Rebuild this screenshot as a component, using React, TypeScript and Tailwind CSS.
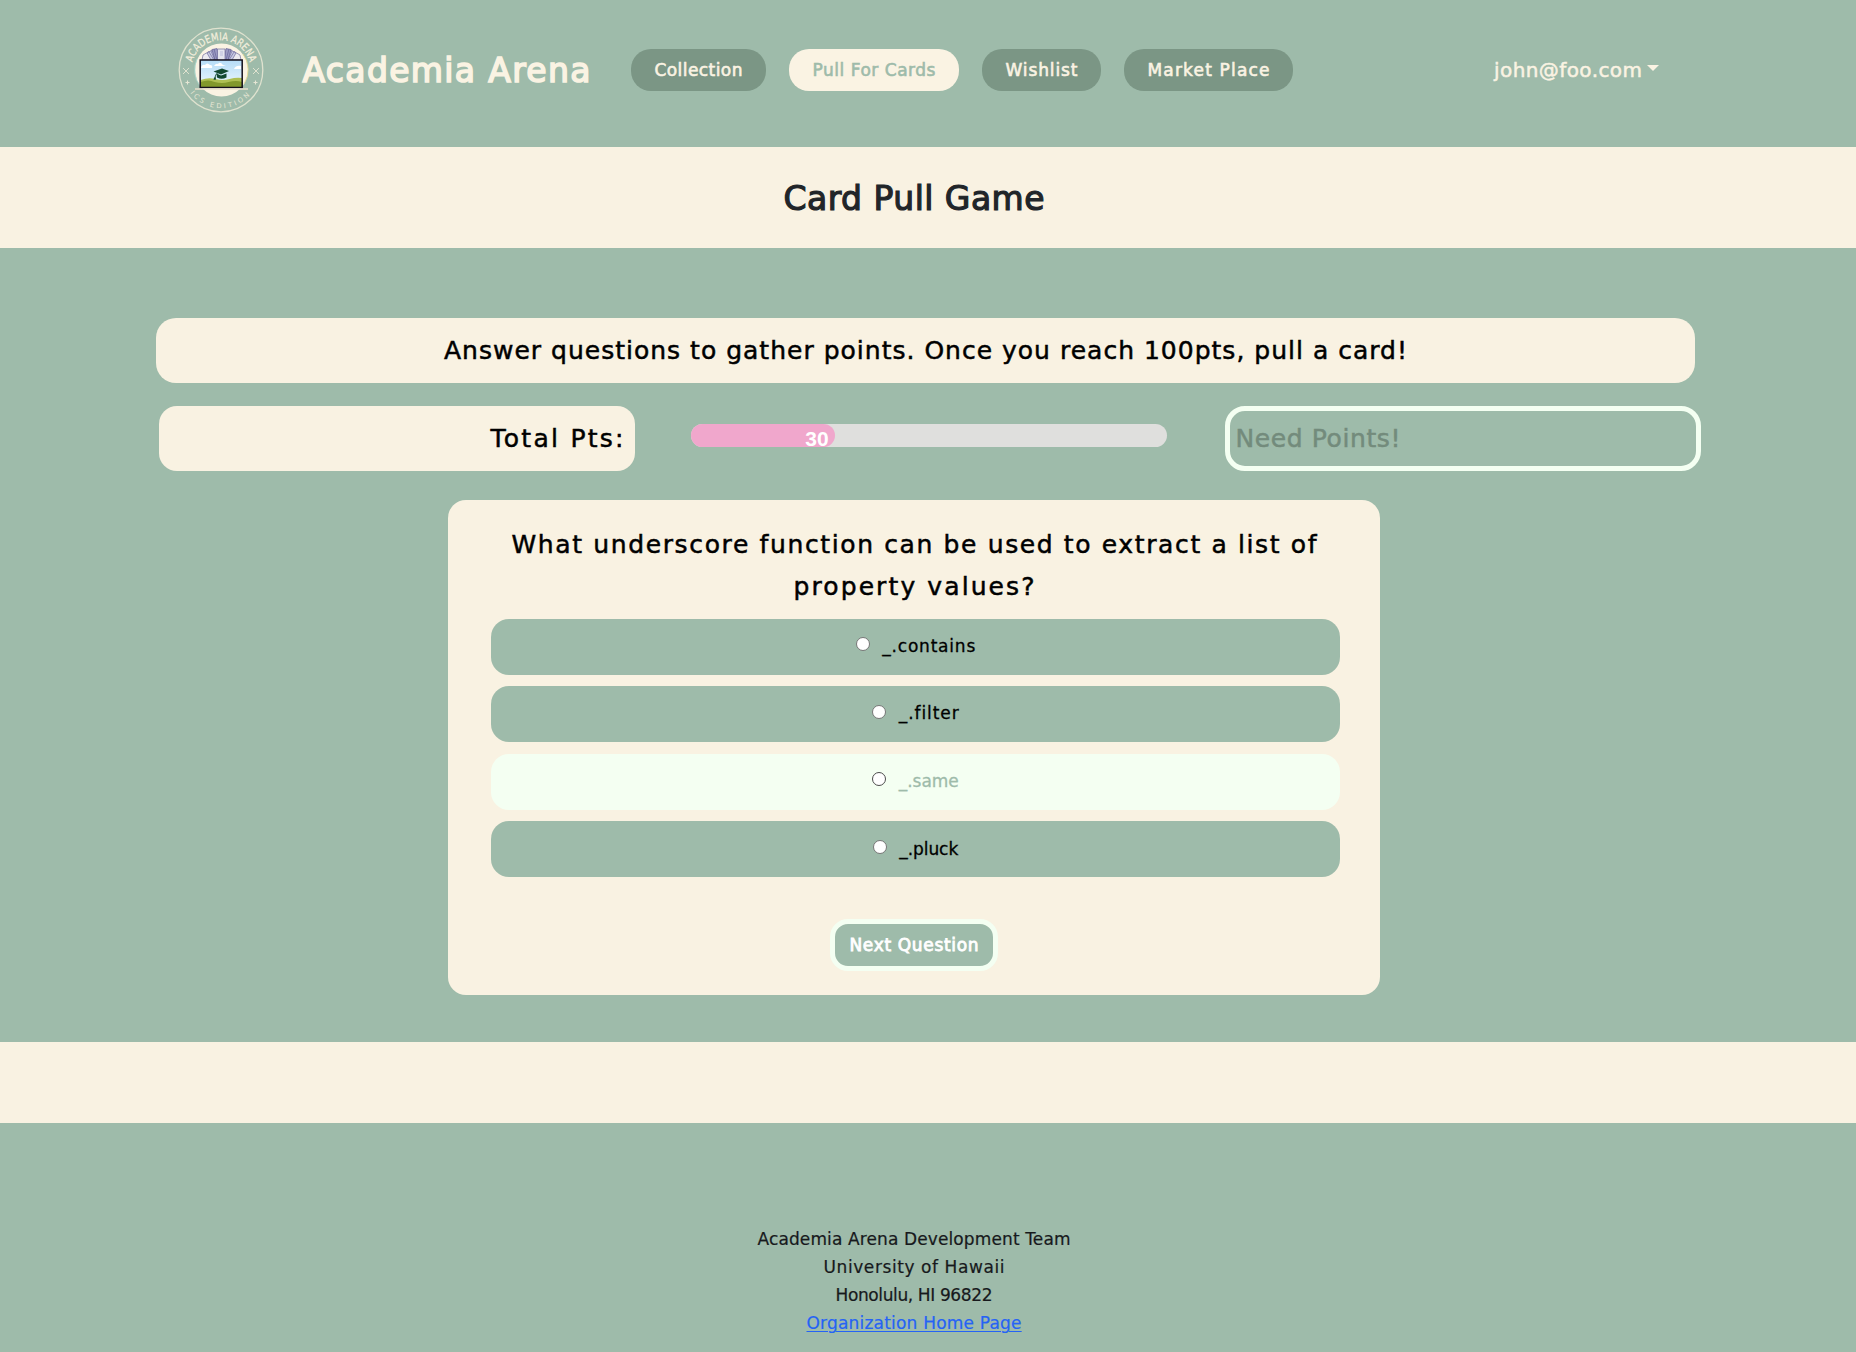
import { useLayoutEffect, useRef } from 'react';

type LabelProps = { text: string; width: number; className?: string };

/** Single-line label whose tracking is computed so that it spans a given width. */
function Label({ text, width, className = '' }: LabelProps) {
  const ref = useRef<HTMLSpanElement>(null);
  useLayoutEffect(() => {
    const el = ref.current;
    if (!el) return;
    el.style.letterSpacing = '0px';
    const natural = el.getBoundingClientRect().width;
    const spacing = (width - natural) / (text.length - 1);
    el.style.letterSpacing = `${spacing}px`;
    el.style.marginRight = `${-spacing}px`;
  }, [text, width]);
  return (
    <span ref={ref} className={`inline-block whitespace-pre ${className}`}>
      {text}
    </span>
  );
}

function Logo() {
  return (
    <svg viewBox="0 0 86 86" className="size-[86px] shrink-0">
      <defs>
        <path id="arc-top" d="M13.3 43 A29.7 29.7 0 0 1 72.7 43" />
        <path id="arc-bottom" d="M4.7 43 A38.3 38.3 0 0 0 81.3 43" />
        <linearGradient id="sky" x1="0" y1="0" x2="0" y2="1">
          <stop offset="0" stopColor="#b5dcf7" />
          <stop offset="1" stopColor="#eef8fd" />
        </linearGradient>
      </defs>
      <circle cx="43" cy="43" r="41.8" fill="none" stroke="#dfe2cf" strokeWidth="1.3" />
      <circle cx="43.5" cy="43" r="26.5" fill="#faf3e3" />
      <path d="M19 32 A26.5 26.5 0 0 0 22 59" fill="none" stroke="#a9dcd2" strokeWidth="0.8" />
      <path d="M65 27 A26.5 26.5 0 0 1 66 57" fill="none" stroke="#e8db8d" strokeWidth="0.8" />
      <text fontFamily="DejaVu Sans" fontSize="10.8" fill="#f4efdd" stroke="#f4efdd" strokeWidth="0.2">
        <textPath href="#arc-top" startOffset="7.6" textLength="78" lengthAdjust="spacingAndGlyphs">
          ACADEMIA ARENA
        </textPath>
      </text>
      <text fontFamily="DejaVu Sans" fontSize="6.8" fill="#e6e6d4">
        <textPath href="#arc-bottom" startOffset="24.5" textLength="68">
          ICS EDITION
        </textPath>
      </text>
      <g stroke="#e6e6d4" strokeWidth="0.9">
        <path d="M5 41 l6 6 M11 41 l-6 6 M75 41 l6 6 M81 41 l-6 6" />
        <path d="M9.5 53.5 v4 M7.5 55.5 h4 M77.5 53.5 v4 M75.5 55.5 h4" strokeWidth="1.1" />
      </g>
      <g stroke="#5e5b92" strokeWidth="0.6" fill="#c8c9e2">
        <path d="M24 33 L25 28 L31 24.5 L36 33 Z" fill="#eceaf0" />
        <path d="M63 33 L62 28 L56 24.5 L51 33 Z" fill="#eceaf0" />
        <path d="M29 26 L34 23 L39 33 L33 33 Z" />
        <path d="M58 26 L53 23 L48 33 L54 33 Z" />
        <path d="M34 22.5 L39 21.5 L41 33 L37 33 Z" fill="#9a99c2" />
        <path d="M53 22.5 L48 21.5 L46 33 L50 33 Z" fill="#9a99c2" />
        <path d="M39.5 22 h7.5 v11 h-7.5 Z" fill="#e4e4ee" />
        <path d="M31 25 l5 8 M33 24 l4 9 M56 25 l-5 8 M54 24 l-4 9 M36 22 l3 11 M51 22 l-3 11" fill="none" />
        <path d="M42 24 h3 v5 h-3 Z" fill="#cfd0e4" stroke="none" />
      </g>
      <rect x="22.2" y="33" width="42" height="27.5" fill="url(#sky)" />
      <path
        d="M23 41 q1-4 4-3 q2-3 5 0 q3 0 2 3 Z M36 39 q2-3 4-2 q2-3 5 1 l3 1 Z M56 42 q2-4 7-3 v3 Z"
        fill="#ffffff"
      />
      <path d="M22.5 53 q8-3 15-1 t14 0 t12.5-1 v9.5 h-41.5 Z" fill="#aebf52" />
      <path d="M22.5 55 q8-3 14 0 q8 2 14 0 q8-2 13.5 0 v5.5 h-41.5 Z" fill="#82982b" />
      <rect x="22.2" y="33" width="42" height="27.5" fill="none" stroke="#14101c" strokeWidth="1.5" />
      <path d="M17 62 h53" stroke="#e9dfcb" strokeWidth="1.5" />
      <path d="M35.5 44.5 L44 41.5 L51 44 L43 47.5 Z" fill="#12482f" />
      <path d="M38.5 46.5 L43 48.5 L48.5 46.5 V50.5 Q43.5 53.2 39 50.5 Z" fill="#12482f" />
      <path d="M43 44.5 Q37 45.5 37 51.5" fill="none" stroke="#12482f" strokeWidth="0.9" />
      <path d="M36 50.5 h1.8 v2.3 h-2.2 Z" fill="#12482f" />
    </svg>
  );
}

const links = [
  { text: 'Collection', width: 88, box: 'w-[135px]', active: false },
  { text: 'Pull For Cards', width: 123, box: 'w-[170px]', active: true },
  { text: 'Wishlist', width: 72, box: 'w-[119px]', active: false },
  { text: 'Market Place', width: 122, box: 'w-[169px]', active: false },
];

const options = [
  { text: '_.contains', width: 93, lit: false },
  { text: '_.filter', width: 60, lit: false },
  { text: '_.same', width: 60, lit: true },
  { text: '_.pluck', width: 59, lit: false },
];

function Option({ text, width, lit }: { text: string; width: number; lit: boolean }) {
  return (
    <label
      className={`flex h-[56px] items-center justify-center rounded-[18px] text-[17px] ${
        lit ? 'bg-[#f4fff2] text-[#9ebbaa]' : 'bg-[#9ebbaa] text-black'
      }`}
    >
      <span
        className={`mr-[12.5px] mb-[5px] size-[14px] rounded-full border bg-white ${
          lit ? 'border-[#4c4c4c]' : 'border-[#767676]'
        }`}
      />
      <Label text={text} width={width} className="[-webkit-text-stroke:0.3px]" />
    </label>
  );
}

export default function App() {
  return (
    <div className="flex h-[1352px] w-[1856px] flex-col overflow-hidden bg-[#9ebbaa] font-['DejaVu_Sans',sans-serif] text-black">
      <header className="flex h-[147px] items-start pl-[178px]">
        <div className="flex h-[140px] items-center">
          <Logo />
          <div className="ml-[38.5px] w-[328.5px] pt-[2px] text-[33px] text-[#faf3e3] [-webkit-text-stroke:1.6px]">
            <Label text="Academia Arena" width={288} />
          </div>
          <nav className="flex gap-[23px]">
            {links.map((l) => (
              <a
                key={l.text}
                className={`flex h-[42px] items-center justify-center rounded-[20px] pt-[2px] text-[17px] [-webkit-text-stroke:0.6px] ${l.box} ${
                  l.active ? 'bg-[#faf3e3] text-[#9ebbaa]' : 'bg-[#7b9685] text-[#faf3e3]'
                }`}
              >
                <Label text={l.text} width={l.width} />
              </a>
            ))}
          </nav>
          <div className="ml-[201px] flex items-center text-[20px] text-[#faf3e3] [-webkit-text-stroke:0.5px]">
            <Label text="john@foo.com" width={148} />
            <span className="mb-1 ml-[5px] border-x-[6px] border-t-[6px] border-x-transparent border-t-[#faf3e3]" />
          </div>
        </div>
      </header>

      <section className="flex h-[101px] items-center justify-center bg-[#f9f2e2] pt-[2px] pr-[28px] text-[33px] text-[#212529] [-webkit-text-stroke:1.2px]">
        <Label text="Card Pull Game" width={261} />
      </section>

      <main className="flex h-[794px] flex-col pt-[70px]">
        <div className="ml-[156px] flex h-[65px] w-[1539px] items-center justify-center rounded-[20px] bg-[#f9f2e2] text-[25px] [-webkit-text-stroke:0.5px]">
          <Label text="Answer questions to gather points. Once you reach 100pts, pull a card!" width={963} />
        </div>

        <div className="mt-[23px] ml-[158.5px] flex gap-[57px] text-[25px] [-webkit-text-stroke:0.5px]">
          <div className="flex h-[65px] w-[476px] items-center justify-end rounded-[18px] bg-[#f9f2e2] pr-[11px]">
            <Label text="Total Pts:" width={133} />
          </div>
          <div className="mt-[18px] -ml-px mr-px h-[23px] w-[476px] rounded-[12px] bg-[#dfdfdd]">
            <div className="h-full w-[30.3%] rounded-[12px] bg-[#f0a7cc] pt-[4px] pr-[6px] text-right font-['Liberation_Sans',sans-serif] text-[21px] leading-[22px] font-bold text-white [-webkit-text-stroke:0px]">
              30
            </div>
          </div>
          <div className="flex h-[65px] w-[476px] items-center rounded-[20px] border-[5.5px] border-[#f4fff2] pl-[6px] text-[#738b7c]">
            <Label text="Need Points!" width={165} />
          </div>
        </div>

        <section className="mt-[29px] ml-[448px] flex h-[495px] w-[932px] flex-col rounded-[18px] bg-[#f9f2e2] pt-[24px] pr-[40px] pl-[43px]">
          <h2 className="flex flex-col items-center pr-[3px] text-[25px] leading-[42px] [-webkit-text-stroke:0.5px]">
            <Label text="What underscore function can be used to extract a list of" width={805} />
            <Label text="property values?" width={241} />
          </h2>
          <div className="mt-[10.5px] flex flex-col gap-[11.6px]">
            {options.map((o) => (
              <Option key={o.text} {...o} />
            ))}
          </div>
          <button className="mt-[42px] mr-[3px] flex h-[52px] w-[168px] shrink-0 items-center justify-center self-center rounded-[18px] border-[5px] border-[#f4fff2] bg-[#9ebbaa] text-[17px] text-white [-webkit-text-stroke:0.8px]">
            <Label text="Next Question" width={129} />
          </button>
        </section>
      </main>

      <div className="h-[81px] shrink-0 bg-[#f9f2e2]" />

      <footer className="flex flex-col items-center pt-[102px] pr-[28px] text-[17px] leading-[28px] text-[#17191c] [-webkit-text-stroke:0.2px]">
        <Label text="Academia Arena Development Team" width={313} />
        <Label text="University of Hawaii" width={181} />
        <Label text="Honolulu, HI 96822" width={157} />
        <a className="text-[#2563f5]">
          <Label text="Organization Home Page" width={215} className="underline decoration-1 underline-offset-2" />
        </a>
      </footer>
    </div>
  );
}
